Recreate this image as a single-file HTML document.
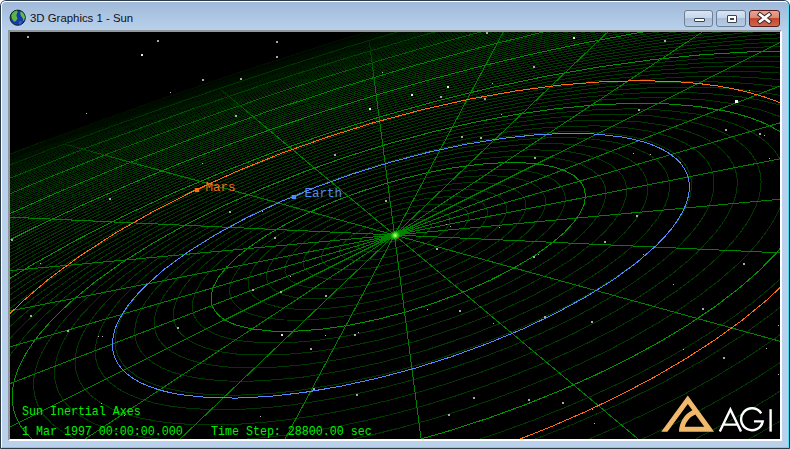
<!DOCTYPE html>
<html><head><meta charset="utf-8"><style>
html,body{margin:0;padding:0;background:#fff;width:790px;height:449px;overflow:hidden}
#win{position:absolute;left:0;top:0;width:790px;height:449px;box-sizing:border-box;
 border-radius:6px 6px 0 0;background:#b9d1ea;overflow:hidden}
#tb{position:absolute;left:0;top:0;width:790px;height:31px;background:linear-gradient(#9fb8d8,#a9c2e0 40%,#b9d1ea)}
#ob{position:absolute;left:0;top:0;width:790px;height:449px;box-sizing:border-box;border:1px solid #2c3a48;border-radius:6px 6px 0 0}
#ib{position:absolute;left:1px;top:1px;width:788px;height:447px;box-sizing:border-box;border:1px solid #fff;border-right-color:#52dcf6;border-bottom-color:#52dcf6;border-radius:5px 5px 0 0}
#title{position:absolute;left:30px;top:12px;font:11.4px "Liberation Sans",sans-serif;color:#101018;letter-spacing:0px}
.btn{position:absolute;top:10px;height:17px;box-sizing:border-box;border:1px solid #6d7f95;border-radius:3px;
 background:linear-gradient(#d9e4f1,#c6d6ea 45%,#a9bfd9 50%,#b8cde4)}
#bmin{left:684px;width:29px}
#bmax{left:716px;width:30px}
#bclose{left:749px;width:31px;border-color:#5a1e1e;background:linear-gradient(#e8a493,#d98a75 45%,#c2472c 50%,#d0674c)}
#vp{position:absolute;left:10px;top:32px;width:770px;height:407px;background:#000;overflow:hidden}
#sunk{position:absolute;left:8px;top:30px;width:774px;height:411px;box-sizing:border-box;border-style:solid;border-width:2px;border-color:#8f969e #fff #fff #8f969e}
svg{position:absolute;left:0;top:0}
.txt{position:absolute;font-family:"Liberation Mono",monospace;white-space:pre;color:#00f000;transform:scaleY(1.08);transform-origin:0 0}
</style></head><body>
<div id="win">
<div id="tb"></div>
<div id="ob"></div><div id="ib"></div>
<svg width="20" height="20" style="left:8px;top:8px" viewBox="0 0 20 20">
 <circle cx="9.7" cy="9.7" r="7.6" fill="#1838b0" stroke="#101828" stroke-width="1"/>
 <path d="M3.2 7.5 Q5 3.2 9 2.6 Q10.5 4.5 8.6 6.2 Q7.8 8.5 9.6 10.5 Q8.5 13.5 6 13.8 Q3.6 11.5 3.2 7.5Z" fill="#58b83c"/>
 <path d="M12.5 3.2 Q16.5 5 17 9.5 Q16.4 12.8 14.8 13.2 Q15.6 10 13.4 8.4 Q11.6 6.8 12.5 3.2Z" fill="#5cc040"/>
 <path d="M11.6 12.8 Q13.6 12.2 14.2 14.4 Q12.8 16.6 11 16.6 Q10.4 14.2 11.6 12.8Z" fill="#2a6a9a"/>
</svg>
<div id="title">3D Graphics 1 - Sun</div>
<div class="btn" id="bmin"><div style="position:absolute;left:9px;top:7px;width:9px;height:2px;border:1px solid #3a4450;background:#fff;border-radius:1px"></div></div>
<div class="btn" id="bmax"><div style="position:absolute;left:10px;top:4px;width:8px;height:6px;border:1px solid #3a4450;background:#fff;border-radius:1px"><div style="position:absolute;left:2px;top:2px;width:4px;height:2px;background:#3a4450"></div></div></div>
<div class="btn" id="bclose"><svg width="31" height="17" viewBox="0 0 31 17" style="left:-1px;top:-1px"><path d="M11 4.6 L20 11.4 M20 4.6 L11 11.4" stroke="#3a2a2a" stroke-width="4.6" stroke-linecap="square"/><path d="M11 4.6 L20 11.4 M20 4.6 L11 11.4" stroke="#fff" stroke-width="2.6" stroke-linecap="square"/></svg></div>
<div id="sunk"></div>
<div id="vp">
<svg width="770" height="407" viewBox="0 0 770 407">
<g fill="none" stroke-width="1" shape-rendering="crispEdges">
<path d="M421.9-16.8l-97 29.1l-96.5 31.1M428.7-19.6l-71.8 21.2l-72.3 22.5l-71.2 23.4l-71.1 24.4M426.2-19.8l-86.3 25.7l-85.5 27.1l-85.1 28.6l-86.3 30.5" stroke="#000600"/><path d="M403.2-5.7l-76.7 23.1l-76.4 24.5M449.4-20l-74.1 21.6l-73 22.4l-73 23.8l-74 25.3M445.8-19.9l-88.3 25.9l-87.1 27.3l-87.8 29.3l-87.4 31.1M442.2-19.9l-100.1 29.6l-98.9 31.6l-99.2 33.8l-99 36.1M438.5-19.7l-109.3 32.5l-108.5 35l-109.5 38l-109.8 40.9M436.1-20l-57.1 16.7l-57.7 17.6l-112.9 36.7l-113.3 39.7l-115.7 43.5M432.4-19.8l-10.5 3M228.4 43.4l-61.3 20.8l-62.5 22l-63 23.2l-62.7 23.9M142.3 71.9l-81.3 29.3l-81.1 30.6M83 92.1l-103.5 38.8" stroke="#000c00"/><path d="M380.5 7.1l-104.4 32.5M471.3-20l-76 21.7l-75.9 23l-74.5 24l-75.2 25.7M466.7-19.8l-91.1 26.3l-89.7 27.8l-88.6 29.5l-89.5 31.8M463.3-19.9l-102.7 29.8l-101.1 31.9l-100.9 34.4l-100.6 36.8M459.9-19.9l-55.7 15.9l-56.1 16.7l-55.8 17.5l-55.8 18.2l-55 18.7l-56 19.8l-56 20.6l-55.1 21M452.9-20l-49.7 14.3M250.1 41.9l-66.8 22.5l-68.2 24.1l-67.7 25.1l-67.8 26.1M155.3 73.1l-88 31.9l-88.4 33.8M95.2 93.7l-58.1 21.6l-57.5 22.1M45 111.2l-66 25.3M1.4 126.7l-21.5 8.3" stroke="#001300"/><path d="M491.1-19.7l-93.7 26.2l-92.8 28.4l-91.5 30.2l-92.2 32.8M486.8-19.7l-105 29.7l-103.9 32.3l-103.3 35l-104.2 38.3M483.6-20l-58.1 16.1l-57 16.8l-57.7 17.7l-56.4 18.3l-56.7 19.2l-56.3 19.9l-57.6 21.2l-56.8 21.9M479.2-19.9l-62 17.3l-62.1 18.4l-61.6 19.2l-61.6 20.3l-61 21l-61 22l-61.5 23.2l-62.4 24.5M474.6-19.8l-94.1 26.9M276.1 39.6l-74.4 24.8l-73.2 25.9l-74.2 27.7l-74.9 29.3M169.7 74.4l-95.1 34.7l-94.8 36.8M107.8 95.6l-63.9 23.9l-65.1 25.5M58 113l-78.8 30.5M14.4 128.5l-34.6 13.6" stroke="#001900"/><path d="M466.3-4.3l-67.2 18.8l-67.2 20.2l-66.9 21.5l-66.1 22.6M520.7-20l-98.3 26.6l-96.6 28.8l-95.9 31.3l-95.2 33.9M515.5-20l-55.2 14.7l-54 15.2l-54.4 16.2l-54.1 16.9l-54 17.7l-53.3 18.4l-52.8 19.1l-53.9 20.3M510.3-19.9l-60.2 16.2l-58.9 16.8l-58.1 17.5l-59 18.8l-58 19.5l-58.7 20.7l-58.7 21.8l-57.9 22.4M505-19.8l-64 17.4l-63.8 18.4l-63 19.3l-62.9 20.4l-62.2 21.3l-63.2 22.9l-62.4 23.6l-63.4 25.2M500.8-19.9l-66.7 18.2l-65.2 19l-65.7 20.3l-64.5 21.1l-65.1 22.6l-64 23.3l-64.6 24.8l-66 26.5M120.9 97.9l-71.4 27l-70.6 28.1M70.4 115.6l-91.5 36M27 131.1l-48 19.1M-14 146l-6.8 2.7" stroke="#001f00"/><path d="M455.9 6.7l-60.7 17.1l-61 18.3l-60.7 19.5l-59.7 20.4M522.7-12.1l-95.3 25.3l-93.6 27.7l-92.9 30.3l-92.8 33.2M541.5-19.7l-62 15.9l-61.6 16.9l-60.5 17.7l-61 19.1l-61 20.3l-60.5 21.3l-60.4 22.5l-59.7 23.4M536.7-20l-65.8 17.1l-66.3 18.5l-65.3 19.4l-64.8 20.7l-65 22.1l-64.8 23.3l-64 24.4l-64.9 26.1M530.7-19.8l-70.8 18.5l-70 19.8l-68.9 20.9l-68.7 22.4l-68 23.5l-68.1 25.1l-69 26.9l-68.1 28M525.7-19.9l-59.4 15.6M198.9 78.8l-54.2 19.5l-55.4 20.9l-54.5 21.5l-55.1 22.7M134.7 100.6l-77.9 29.9l-77.7 31.5M83.8 118.5l-51.7 20.3l-52.2 21.3M40.8 133.8l-61.3 24.9M0.1 148.7l-20.9 8.6" stroke="#002500"/><path d="M445.9 18.7l-54.4 15.2l-54.7 16.5l-54.5 17.5l-53.4 18.2M513.4-0.5l-89.2 23.5l-88.9 26.3l-87.1 28.5l-86.8 31.3M565-14.5l-58.1 14l-57.7 15.1l-56.5 15.9l-56.8 17l-56.5 18.2l-55.6 19l-56 20.3l-55.9 21.4M581.7-20l-65.9 15.7l-64.9 16.9l-64.5 18.2l-63.6 19.3l-63.4 20.7l-63.6 22.3l-63.5 23.7l-62.8 24.9M574.2-19.9l-69.6 16.9l-69.5 18.4l-68 19.6l-68.3 21.3l-67.2 22.5l-66.7 24l-67 25.7l-66.7 27.2M567.7-20l-73.3 18.1l-73.1 19.7l-71.6 21l-72 22.9l-71.1 24.4l-71.1 26.1l-70.7 27.8l-69.9 29.3M561.1-20l-53.3 13.1l-51.9 13.6M213.8 82l-59.3 21.5l-58.3 22.3l-58.7 23.7l-58.3 24.7M554.3-19.9l-31.6 7.8M148.1 104.4l-84.3 32.7l-84.6 35.2M54.8 137.4l-75.3 31.2M15.8 151.6l-35.9 15.1" stroke="#002c00"/><path d="M436.2 31.6l-48 13.5l-48.5 14.6l-48.2 15.5l-47.3 16.1M505.5 12l-83.7 21.7l-82.6 24.4l-81.9 26.8l-81.3 29.5M555.2-1.6l-54.5 12.9l-55.3 14.2l-54.2 15.2l-53.5 16.1l-53.3 17.1l-53.2 18.3l-52.6 19.3l-52.2 20.3M598.5-13l-66 14.8l-64.8 16.1l-65.3 17.8l-64.2 19.2l-63.8 20.6l-63.9 22.4l-62.5 23.5l-62.8 25.2M613.4-19.9l-77.7 17.4l-76.8 19.3l-75.7 21.2l-75.5 23.2l-75.3 25.4l-73.9 27.1l-73.5 29l-72.6 31M604.3-19.8l-79.1 18.1l-79.3 20.4M228.9 86.1l-63.3 23.1l-62.2 24.2l-62.9 26l-61.5 27.1M596.2-19.8l-82.8 19.3M161.4 109.1l-45.8 17.6l-45.5 18.4l-45.4 19.1l-45.5 20M589.1-19.9l-24.1 5.4M111.9 126.4l-66.1 26.9l-66.2 28.6M69.5 141.7l-45.3 18.8l-45.2 19.7M31.2 155.7l-51.5 22.1M-5.1 169.3l-15.5 6.7" stroke="#003200"/><path d="M398.2 203.6l4.2-3.9l0.5-1.7l-0.6-1.4l-1.6-1l-2.6-0.6l-7.5 0.3l-8.8 2.2l-8.3 3.5l-5.6 3.9l-1.4 1.9l-0.3 1.7l1.1 1.6l2.5 0.9l8.6-0.1l10.7-2.8l9.1-4.5M412.4 204.3l5-4l3.1-3.8l0.9-3.4l-1.3-2.8l-3.3-2l-5.3-1.1l-6.8-0.1l-8.1 0.8l-8.7 1.8l-9 2.6l-8.6 3.2l-7.8 3.7l-6.4 4l-4.8 4l-2.7 3.7l-0.7 3.3l0.7 1.7l1.5 1.5l5.2 1.9l7.7 0.6l9.7-0.9l10.7-2.3l10.8-3.4l9.9-4.2l8.3-4.8M427 205l7.3-6l4.4-5.7l1.1-2.6l0.2-2.4l-0.6-2.2l-1.4-1.9l-5.2-3l-7.9-1.6l-10.4-0.1l-12.1 1.3l-13.2 2.7l-13.3 3.8l-12.9 4.9l-11.6 5.6l-9.6 5.9l-7 5.9l-4.2 5.7l-0.8 2.6l-0.1 2.4l1.1 2.5l2.2 2.2l3.4 1.7l4.5 1.2l11.8 0.8l14.6-1.4l16.1-3.4l16.3-5.2l15-6.5l12.3-7.2M442 205.7l9.6-8l3.3-3.8l2.4-3.7l1.2-3.4l0.2-3.2l-0.9-2.9l-2-2.6l-3-2.1l-4-1.7l-10.7-2.1l-13.8-0.1l-16.2 1.7l-17.5 3.6l-17.8 5.2l-17.1 6.5l-15.5 7.5l-12.7 7.9l-9.3 7.9l-3.3 3.9l-2.2 3.6l-1.1 3.4l-0.1 3.2l1.4 3.5l3 2.9l4.6 2.3l6.1 1.6l7.3 0.8l8.4 0.2l19.8-1.9l21.7-4.7l21.8-7.1l20.1-8.7l16.3-9.7M457.5 206.4l11.7-9.9l4.1-4.8l2.7-4.5l1.5-4.4l0-3.9l-1.2-3.6l-2.6-3.1l-3.9-2.7l-5.1-2.1l-6.3-1.5l-7.3-0.9l-17.4-0.1l-20.2 2.2l-21.9 4.6l-22.2 6.5l-21.3 8.2l-19.1 9.3l-15.9 9.9l-11.6 9.9l-4.1 4.8l-2.7 4.5l-1.4 4.3l0 4l1.8 4.3l3.9 3.7l5.8 2.9l7.7 1.9l9.3 1.1l10.7 0.2l12-0.8l12.8-1.7l13.6-2.6l13.9-3.4l13.7-4.1l13.6-4.8l13-5.4l12-5.7l11-6.1l9.4-6.2M473.6 207.1l7.5-6l6.1-5.8l4.7-5.7l3.1-5.5l1.6-5.1l-0.1-4.7l-1.6-4.3l-3.3-3.7l-4.8-3.1l-6.2-2.5l-7.6-1.7l-8.9-1.1l-10.1-0.4l-10.9 0.3l-24.4 2.9l-26.3 5.5l-26.6 7.9l-25.5 9.8l-22.7 11.1l-19 11.9l-7.5 5.9l-6.3 6l-4.8 5.7l-3.3 5.5l-1.6 5.1l-0.1 4.8l2.2 5.3l4.7 4.4l7.1 3.4l9.3 2.4l11.2 1.3l13.1 0.2l14.5-1l15.7-2.1l16.3-3.2l16.8-4.2l16.8-5l16.5-5.9l15.5-6.5l14.7-7.1l13-7.3l11.2-7.5M490.1 207.9l8.5-7l7-6.8l5.3-6.7l3.5-6.3l1.6-6l-0.3-5.4l-2.2-4.9l-3.9-4.2l-5.7-3.6l-7.4-2.8l-9.1-2.1l-10.4-1.2l-11.7-0.4l-12.9 0.5l-14 1.3l-14.6 2.1l-30.7 6.5l-31 9.3l-29.7 11.5l-26.4 13l-11.6 6.8l-10.4 7l-8.7 6.9l-7.3 6.9l-5.5 6.7l-3.8 6.4l-1.9 5.9l-0.1 5.7l1 3.2l1.6 3l2.4 2.7l3.2 2.5l8.4 4.1l11 2.8l13.3 1.5l15.4 0.1l17.1-1.2l18.5-2.5l19.5-3.8l19.7-5l19.7-6.1l19.2-6.9l18.2-7.7l17-8.3l15.1-8.6l13.1-8.9M507.2 208.7l9.5-7.9l7.7-7.8l5.8-7.6l3.7-7.3l1.7-6.8l-0.6-6.1l-2.6-5.5l-4.7-4.8l-6.6-4l-8.7-3.2l-10.4-2.3l-12.2-1.3l-13.6-0.4l-14.7 0.6l-16 1.5l-16.7 2.5l-17.5 3.4l-17.7 4.2l-17.8 4.9l-17.5 5.7l-17.2 6.3l-16.7 6.9l-15.6 7.2l-14.6 7.7l-13.2 7.9l-11.7 7.9l-10 8l-8.3 7.9l-6.3 7.7l-4.2 7.3l-2.1 6.8l-0.1 6.3l1.2 3.8l1.9 3.4l2.8 3.2l3.6 2.8l9.7 4.6l12.9 3.3l15.6 1.7l17.8 0.1l19.9-1.5l21.4-3l22.5-4.5l22.7-5.8l22.6-7l22.1-8l20.7-8.9l19.4-9.6l17.4-10.2l14.7-10.1M524.8 209.5l10.6-9l8.4-8.8l6.1-8.4l3.9-8.1l1.6-7.5l-0.8-6.9l-3.2-6.1l-5.5-5.4l-7.8-4.5l-10-3.5l-11.9-2.4l-13.6-1.5l-15.3-0.3l-17 0.7l-17.9 1.8l-18.9 2.8l-19.6 3.8l-20 4.8l-19.9 5.6l-19.7 6.4l-19.4 7.1l-18.6 7.8l-17.6 8.2l-16.2 8.6l-14.9 8.9l-13.2 9l-11.3 9l-9.1 8.8l-7 8.6l-4.7 8.2l-2.4 7.8l-0 7.1l1.2 4.3l2.2 3.9l3.3 3.6l4.2 3.3l5.1 2.8l6.1 2.5l14.6 3.6l17.7 1.9l20.5 0.1l22.6-1.8l24.3-3.4l25.5-5.2l25.7-6.6l25.6-8.1l24.9-9.2l23.8-10.3l21.7-10.9l19.4-11.4l16.5-11.7M561.9 211.2l12.2-10.9l9.6-10.8l6.9-10.3l4.1-9.8l1.2-9.1l-0.4-4.2l-1.3-4.1l-1.9-3.9l-2.6-3.5l-7.3-6.4l-10.1-5.3l-12.6-4l-15-2.9l-17.2-1.6l-18.9-0.2l-20.8 1l-22.2 2.4l-23.3 3.6l-23.7 4.7l-24.4 5.9l-24.3 7l-24.4 8l-23.5 8.8l-22.7 9.6l-21.4 10.1l-19.8 10.6l-18 10.9l-16 11.1l-13.5 10.9l-11.1 10.9l-8.4 10.5l-5.7 10.1l-2.9 9.6l-0.3 4.5l0.3 4.3l1.7 5.3l2.9 5l4.1 4.6l5.3 4l6.5 3.5l7.5 3l8.8 2.6l9.6 1.9l22.4 2.3l25.4-0l28.2-2.2l30.7-4.5l31.7-6.6l32.5-8.6l31.7-10.1l31.1-11.8l29.1-12.9l26.8-13.9l23.6-14.5l19.8-14.6M581.5 212.1l13.1-12.1l10-11.7l7.1-11.1l4-10.7l0.9-5l0-5l-0.7-4.6l-1.5-4.3l-2.3-4.2l-3.1-3.8l-8.3-6.9l-11.3-5.6l-14-4.4l-16.6-3l-19-1.6l-21-0.2l-23 1.3l-24 2.6l-25.5 4l-26.4 5.4l-26.5 6.5l-26.5 7.7l-26.5 8.8l-25.6 9.7l-24.8 10.5l-23.3 11.1l-21.2 11.5l-19.7 12l-17.2 12l-14.8 12.1l-12 11.9l-9.1 11.5l-6.1 11.1l-3 10.3l-0.4 4.9l0.5 4.8l1.8 5.9l3.1 5.4l4.6 5l5.9 4.4l7.2 4l8.4 3.3l9.8 2.8l10.8 2.2l11.9 1.5l12.8 0.9l28.5 0l31.1-2.6l33.8-5l35-7.3l35.7-9.6l35.4-11.5l34-13.1l31.8-14.3l29-15.3l25.6-15.9l21.6-16.3M601.7 213.1l13.5-12.9l10.6-12.8l7.4-12.2l2.3-5.7l1.6-5.8l0.7-5.4l-0.1-5.2l-1-5l-1.8-4.7l-2.7-4.5l-3.5-4.2l-4.2-3.7l-5.2-3.6l-12.6-6l-15.6-4.7l-18.2-3.1l-20.7-1.7l-23.1-0.1l-24.8 1.5l-26.1 2.9l-27.7 4.4l-28.6 5.9l-28.8 7.1l-29 8.5l-28.3 9.4l-27.7 10.5l-26.8 11.5l-25.2 12.1l-23.1 12.5l-21.1 12.9l-18.7 13.2l-16 13.1l-12.9 12.9l-9.8 12.5l-6.7 12.1l-2.1 5.8l-1.2 5.5l-0.4 5.4l0.5 5.2l1.9 6.5l3.5 6l5.1 5.5l6.4 4.9l8.1 4.4l9.3 3.7l10.5 3l11.9 2.3l13.3 1.8l14.2 0.9l31.3-0.1l34.7-2.9l37-5.6l38.3-8.2l39-10.6l38.6-12.7l37-14.4l35-16l31.3-16.7l27.8-17.7l12.1-8.9l10.8-8.8M622.7 214l14.2-14l10.9-13.7l7.4-13l2.3-6.3l1.4-6l0.6-5.9l-0.4-5.5l-1.3-5.4l-2.2-5.1l-3-4.7l-4-4.4l-4.7-4.1l-5.8-3.8l-13.9-6.4l-17.1-4.9l-20.1-3.3l-22.4-1.7l-25.2 0l-27 1.7l-28.4 3.2l-29.9 4.9l-30.8 6.4l-31 7.8l-31.2 9.1l-30.8 10.4l-29.8 11.4l-28.8 12.4l-27.1 13.2l-24.9 13.5l-22.7 14.1l-20 14.2l-17 14.2l-13.8 13.9l-10.5 13.5l-4.1 6.7l-3 6.4l-2.3 6.3l-1.2 6l-0.4 5.9l0.6 5.5l2.2 7.1l3.8 6.5l5.6 6.1l7.2 5.3l8.6 4.7l10.3 4.1l11.6 3.2l13.2 2.6l14.3 1.8l15.7 1.1l16.5 0.3l17.6-0.5l37.8-3.2l40.3-6.3l42.4-9.1l42.4-11.6l41.8-14l40-15.8l37.7-17.4l34.2-18.7l15.5-9.6l14.1-9.6l13.1-9.8l11.5-9.7M644.4 215l14.7-15l11.1-14.5l4.2-7.1l3.3-7.1l2.3-6.7l1.2-6.5l0.3-6.3l-0.6-6l-1.6-5.5l-2.6-5.4l-3.6-5l-4.5-4.8l-5.4-4.3l-6.3-4l-7.2-3.5l-8.2-3.3l-18.6-5.1l-21.8-3.4l-24.5-1.7l-27 0.1l-29.2 1.9l-31.1 3.7l-32.2 5.3l-33.1 7l-33.6 8.6l-33.4 9.9l-32.9 11.2l-31.8 12.3l-30.8 13.4l-28.7 14l-26.7 14.7l-24 15l-21.5 15.4l-18.3 15.4l-14.7 15l-11.1 14.6l-4.1 7l-3.3 6.9l-2.3 6.6l-1.3 6.6l-0.4 6.3l0.6 6l2.5 7.8l4.4 7.3l6 6.4l7.9 5.9l9.5 5l11.4 4.5l12.9 3.5l14.1 2.8l15.8 1.9l16.8 1.1l18.2 0.3l19.5-0.6l20-1.4l21-2.3l43.8-6.9l45.9-10l45.8-12.8l45.1-15.2l43.8-17.6l40.4-19l18.8-10l17.6-10.2l16.7-10.6l15.1-10.5l13.5-10.5l12.2-10.6M667 216.1l15.1-16l6.1-7.8l5.3-7.9l4.2-7.7l3.1-7.3l2.1-7.2l1.1-7l-0-6.5l-0.9-6.4l-2-5.9l-3.1-5.8l-4.1-5.3l-5.1-5l-6-4.6l-7.1-4.2l-7.9-3.7l-8.9-3.4l-20.3-5.3l-23.4-3.5l-26.7-1.7l-29.3 0.3l-31.4 2.1l-32.9 4l-34.5 5.8l-35.3 7.6l-35.8 9.2l-35.6 10.6l-35.1 12l-33.8 13.2l-32.9 14.3l-30.6 15.1l-28.5 15.8l-25.8 16.2l-22.8 16.5l-19.4 16.5l-15.6 16l-11.8 15.7l-4.5 7.5l-3.5 7.5l-2.4 7.2l-1.4 7l-0.4 6.7l0.7 6.5l2.6 8.4l4.6 7.8l6.5 7l8.6 6.4l10.3 5.6l12 4.7l14.1 4l15.4 3l17.3 2.1l18.4 1.2l20 0.3l20.7-0.7l22-1.5l23.1-2.5l23.2-3.4l24-4.2l24.6-5l24.9-6l25.2-6.7l24.1-7.1l24.9-8.2l24.5-8.7l23.9-9.3l23-9.8l22.1-10.1l21-10.5l20.4-11l18.9-11.2l17.3-11.2l16.2-11.6l14.4-11.4l12.9-11.5M690.5 217.2l15.6-17.3l6.2-8.5l5.1-8.1l4-7.9l3.1-7.8l1.9-7.5l0.9-7.4l-0.3-7l-1.3-6.8l-2.5-6.4l-3.4-5.9l-4.6-5.6l-5.7-5.3l-6.7-4.8l-7.7-4.5l-8.7-3.9l-9.7-3.5l-21.9-5.6l-25.5-3.6l-28.5-1.7l-31.1 0.4l-33.7 2.4l-35.7 4.4l-36.8 6.3l-37.5 8.1l-38 9.8l-38.3 11.6l-37.2 12.8l-36.4 14.3l-34.3 15.1l-32.6 16.2l-30.4 17l-27.5 17.4l-24 17.5l-20.5 17.6l-16.5 17.2l-6.7 8.4l-5.9 8.4l-4.6 8.1l-3.7 8l-2.6 7.8l-1.4 7.6l-0.4 7.2l0.8 6.7l2.9 9.2l5 8.4l7.1 7.6l9.4 7l11.4 6.1l13.2 5.1l14.9 4.1l16.9 3.3l18.4 2.2l20.2 1.3l21.1 0.2l22.7-0.7l24.2-1.8l24.5-2.7l25.5-3.7l26.3-4.7l26.9-5.7l26.3-6.3l27.5-7.5l26.4-8l26.2-8.6l26.6-9.7l25-9.9l25-10.8l23.9-11.2l22.6-11.5l21.1-11.7l20.2-12.3l18.5-12.2l16.6-12.2l15.1-12.4l13.1-12.1M714.9 218.3l8.4-9.2l7.3-9l6.1-8.7l5.2-8.8l4-8.5l2.9-8.4l1.7-8l0.6-7.9l-0.6-7.4l-1.8-7l-2.9-6.7l-4.2-6.5l-5.2-5.9l-6.2-5.4l-7.4-5.1l-8.5-4.6l-9.4-4.1l-10.6-3.6l-11.6-3.2l-12.4-2.6l-27.4-3.7l-30.8-1.6l-33.4 0.6l-35.7 2.6l-38 4.9l-39 6.8l-40.3 8.8l-40.3 10.5l-40.4 12.4l-39.3 13.7l-38.4 15.2l-36.9 16.4l-34.5 17.3l-31.8 17.9l-28.8 18.5l-25.6 18.9l-21.5 18.7l-17.4 18.3l-7.1 9l-6.1 9l-4.9 8.7l-3.7 8.3l-2.7 8.3l-1.5 7.9l-0.3 7.8l0.8 7.3l3.2 9.9l5.5 9.1l7.7 8.3l9.9 7.4l12 6.4l14.4 5.6l16.2 4.5l18.5 3.6l20 2.4l21.3 1.3l23.2 0.3l24.9-0.9l25.4-1.9l26.8-3l27.9-4.1l27.7-5.1l28.4-6l28.7-7l28.9-7.9l28.8-8.8l28.4-9.6l27.9-10.3l27.1-10.9l27.1-11.8l24.8-11.9l24.4-12.6l22.7-12.8l20.9-12.9l19.7-13.4l17.6-13.2l15.9-13.5l13.7-13.1M740.3 219.5l8.3-9.5l7.4-9.7l6.2-9.3l5.2-9.5l3.8-9l2.7-9l1.4-8.5l0.2-8l-1.1-7.9l-2.3-7.4l-3.5-7.1l-4.6-6.6l-5.9-6.2l-6.9-5.7l-8.1-5.2l-9.4-4.9l-10.2-4.2l-11.4-3.8l-12.6-3.3l-13.3-2.7l-29.7-3.7l-32.7-1.5l-35.8 0.7l-38.6 3.1l-40.4 5.3l-41.3 7.3l-42.6 9.5l-43 11.4l-42.5 13.1l-41.9 14.8l-40.6 16.2l-38.8 17.5l-36.4 18.5l-33.2 19l-30.1 19.5l-26.8 20l-22.6 19.9l-9.6 9.7l-8.7 9.8l-7.4 9.6l-6.2 9.3l-5.2 9.3l-4 9l-2.7 8.9l-1.6 8.5l-0.3 8l0.9 7.9l3.5 10.7l6 9.9l8.5 9l10.8 7.9l13.1 7l15.7 6l17.8 4.9l19.6 3.7l21.2 2.5l23.3 1.5l25.3 0.2l26.3-1l27.8-2.2l28.2-3.2l29.3-4.4l30.2-5.6l30.9-6.6l31.3-7.8l31.5-8.8l30.1-9.3l29.7-10.2l30.2-11.3l29.3-12l28.1-12.5l26.8-13l25.1-13.3l24.3-14l22.3-14l20.1-14.1l18.6-14.3l16.8-14.6l14.2-14.2M789.9 94.1l-8.7-4.7l-9.7-4.4l-21.8-7.3l-24.8-5.7l-28.3-3.9l-30.3-2l-33.2-0.3l-35.2 1.6l-36.9 3.5l-38.6 5.2l-39.3 6.9l-40.5 8.6l-40.3 10.2l-40.6 11.7l-40.2 13l-39.7 14.5l-38.4 15.5l-37 16.6l-35 17.3l-32.7 17.9l-30.7 18.7l-27.6 18.8l-24.7 19l-21.6 19.1l-18.2 19l-14.7 18.7l-5.8 9.1l-4.9 8.8l-3.9 8.7l-3 8.4l-2.1 8.3l-1 8.3l-0.1 7.8l0.9 7.7l1.8 7.2l2.9 7.1l3.7 6.5l4.8 6.3l5.7 6l6.5 5.5M404.8 426.6l29.9-8.4l29.8-9.3l29.4-10l30.3-11.1l28.3-11.2l28.6-12.3l27.4-12.7l26.2-13.1l24.8-13.3l23.1-13.5l22.5-14.2l20.6-14.2l18.6-14l17.3-14.4l15.2-14.2l13.5-14.3M789.6 79.2l-17.6-5.8l-19.4-4.7l-21-3.7l-23-2.6l-24.4-1.6l-25.7-0.5l-26.7 0.6l-28.4 1.7l-29.2 2.7l-30 3.8l-30.7 4.8l-31.4 5.8l-31.9 6.9l-31.8 7.7l-31.6 8.5l-32 9.6l-31.8 10.3l-30.8 11l-30.5 11.7l-30.2 12.5l-29 13.1l-28 13.5l-26.8 14l-25.6 14.3l-24.2 14.8l-22.3 14.7l-20.7 15l-18.7 14.8l-17.3 15.3l-15.1 15l-13.1 14.9l-10.8 14.4M469.6 426.6l48.5-16.7l46.8-18.4l45.9-20.2l42.9-21.2l40.3-22.5l36-22.8l32.2-23.3l14.6-11.8l13.3-11.7M789.6 67.8l-19.1-4.4l-20.5-3.5l-21.9-2.6l-23.1-1.6l-24.3-0.7l-25.9 0.2l-26.3 1.2l-27.7 2.1l-28.5 3.1l-28.6 3.9l-29.9 4.8l-29.8 5.7l-30.4 6.6l-30.2 7.3l-30.8 8.2l-30.5 8.9l-30.3 9.6l-30.1 10.4l-29.8 11l-28.9 11.5l-27.9 12l-27.6 12.6l-26.5 13l-25.5 13.4l-24.3 13.7l-23.2 14l-21.8 14.2l-20.5 14.4l-19.1 14.6l-17.1 14.4l-15.9 14.7l-13.8 14.4M529 426.9l38.2-14.8l38.3-16.4l35.1-16.3l34.5-17.6l32.1-18l30.6-18.9l27.8-18.9l24.6-18.7M789.8 58.4l-19.9-3.4l-21.1-2.5l-22.3-1.8l-24-0.9l-24.4-0l-25.9 0.8l-26.8 1.6l-26.9 2.5l-27.6 3.3l-28.2 4l-28.9 4.9l-29.5 5.8l-59.1 13.6l-59.2 16.5l-58.4 19l-57.5 21.5l-27.7 11.5l-27.5 12.1l-26.4 12.5l-25.6 12.8l-24.4 13l-23.5 13.4l-22.8 14l-21.1 13.8l-19.9 13.9l-18.6 14.1l-17.2 14.2l-15.7 14.2M587.1 426.9l28.1-12l28.7-13.2l27.7-13.6l26.3-13.9l24.9-14l24.8-14.9l21.8-14.3l21.4-14.9M789.8 50.1l-21-2.5l-22-1.8l-23-1.1l-24.1-0.2l-24.9 0.5l-25.7 1.3l-53 4.8l-55.7 7.9l-56.6 10.6l-57.5 13.4l-58.1 16.1l-57.4 18.5l-56 20.6l-54.5 22.7l-51.6 24.3l-48.4 25.6l-23 13.3l-21.9 13.5l-20.2 13.3l-19.7 13.8l-18.4 14l-17.1 13.9M645.8 426.3l38.7-18.7l37.8-20l35.1-20.4l33.4-21.4M789.4 42.7l-21.6-1.8l-22.7-1.2l-23.6-0.4l-23.8 0.2l-50.6 2.7l-53.4 5.5l-54.6 8.2l-56.1 10.8l-57 13.5l-56.9 15.8l-56.2 18l-55.6 20.1l-53.5 21.9l-51.4 23.5l-48.5 24.8l-45.3 26l-41.3 26.6l-19.3 13.7l-18.1 13.7M702.8 426.4l45.7-24.5l41.8-25M789.4 36l-45.3-1.8l-48.1 0.7l-51 3.5l-53 6l-54.6 8.6l-55.5 11l-55.5 13.2l-56.2 15.7l-55.6 17.6l-55 19.8l-53 21.3l-51.1 22.8l-48.3 24l-46 25.5l-42.9 26.4l-38.8 26.8M760.9 426.3l29.4-17M789.3 29.9l-46-0.9l-49.2 1.7l-51.2 4.1l-52.3 6.4l-53.9 8.8l-54.7 11.1l-55.3 13.3l-55.4 15.4l-54.8 17.3l-54.3 19.2l-53 21l-51.2 22.5l-48.5 23.5l-46.5 25l-43.6 25.8l-39.7 26.3M789.4 24.2l-46.3 0l-49.4 2.3l-51.3 4.7l-52.2 6.8l-53.7 9l-54.4 11.3l-55.2 13.3l-54.5 15.2l-54.5 17.1l-53.4 18.8l-52.2 20.3l-51.2 22l-49.3 23.4l-46.7 24.4l-44.1 25.3l-41.1 26.1M789.7 13.9l-48.1 1.5l-50 3.6l-50.8 5.5l-52.4 7.5l-53.1 9.5l-53.7 11.4l-54.4 13.4l-53.7 15l-53.9 16.8l-52.7 18.3l-51.6 19.7l-50.8 21.2l-49 22.4l-47.5 23.7l-45 24.4l-43.1 25.6M789.3 9.2l-48.8 2.2l-49.6 4l-51.3 6l-52.7 7.9l-53.4 9.8l-53.2 11.5l-53.9 13.4l-53.1 14.9l-53.4 16.6l-52.2 18l-52 19.7l-50.3 20.8l-49.6 22.3l-47.2 23.1l-45.6 24.3l-43.2 24.9M789.9 4.8l-49.3 2.7l-50.1 4.5l-51.6 6.3l-52.2 8.2l-52.8 9.9l-53.4 11.7l-53.3 13.2l-53.4 15l-52.8 16.4l-52.4 18l-51.5 19.3l-50.6 20.6l-49.1 21.8l-47.6 22.9l-46.1 24l-43.8 24.7M789.8 0.5l-49.7 3.2l-50.4 5l-51 6.6l-52.4 8.5l-52.9 10.1l-52.8 11.7l-53.4 13.4l-52.7 14.7l-53 16.5l-51.8 17.6l-51.7 19.2l-50 20.2l-49.4 21.6l-47.9 22.7l-46.6 23.8l-44.3 24.4M789.9-3.5l-50 3.7l-50.6 5.3l-51.1 7l-52.5 8.7l-53.1 10.3l-52.8 11.8l-52.7 13.3l-52.8 14.9l-52.3 16.2l-51.9 17.6l-51.8 19.1l-50.2 20.1l-48.7 21.1l-48.2 22.5l-46.9 23.5l-44.6 24.1M789.4-7.4l-50.1 4.2l-50.8 5.7l-51.1 7.3l-52.7 8.9l-52.2 10.4l-52.8 11.9l-52.8 13.4l-52.8 14.9l-52.3 16.2l-51.9 17.5l-51.1 18.8l-50.3 19.9l-48.8 20.9l-48.4 22.3l-47.1 23.3l-45 23.9M789.4-11.1l-50.3 4.6l-51.7 6.1l-52.2 7.7l-51.6 9.1l-52.2 10.5l-52.8 12.1l-52.7 13.4l-52 14.7l-52.2 16.2l-51.2 17.2l-51 18.6l-50.3 19.8l-48.9 20.8l-48.5 22l-47.3 23l-45.2 23.6M789.9-14.7l-50.3 4.9l-51.8 6.5l-52.1 7.9l-51.6 9.2l-52.1 10.6l-51.9 12l-52.7 13.5l-51.9 14.6l-52.2 16.1l-51.1 17.1l-51 18.5l-50.3 19.6l-48.9 20.5l-48.5 21.7l-47.3 22.7l-46.2 23.7M789.9-18.1l-50.2 5.2l-51.7 6.7l-52.1 8.2l-52.4 9.5l-52 10.8l-52.7 12.2l-52.5 13.5l-51.8 14.7l-52.1 16.1l-51 17l-50 18.1l-50.3 19.4l-49.7 20.7l-48.5 21.5l-47.4 22.5l-46.2 23.3M748.6-19.9l-49.6 6.7l-49 7.7l-49.5 9l-49.2 10l-49.9 11.3l-48.9 12.1l-49 13.3l-49.3 14.5l-49 15.5l-47.9 16.3l-47.9 17.5l-47.4 18.3l-46.8 19.4l-46.5 20.4l-45.4 21.1l-44.2 21.8M726.8-19.9l-47.5 7.1l-48.1 8.2l-47.7 9.2l-48.5 10.3l-48.3 11.4l-47.4 12.1l-47.6 13.2l-48.1 14.4l-47.7 15.3l-46.7 16l-45.9 16.8l-46.2 18l-45.8 18.9l-44.4 19.4l-44.2 20.4l-43.1 20.9M708.7-19.9l-46.5 7.5l-47.2 8.6l-47 9.4l-46.7 10.4l-46.8 11.3l-46.8 12.3l-46.2 13l-45.8 13.9l-46.5 15.1l-45.5 15.7l-44.7 16.4l-45 17.4l-44.5 18.3l-44.2 19.2l-43 19.7l-42.9 20.6M692.4-19.8l-45.7 7.8l-46.3 8.8l-46.2 9.7l-45.1 10.3l-46.1 11.5l-45.3 12.1l-44.8 12.9l-45.4 13.9l-45.1 14.7l-44.2 15.4l-44.4 16.3l-43.8 17l-43.3 17.7l-42.9 18.5l-42.7 19.4l-41.5 19.7M678.8-19.9l-44.7 8l-45.6 9l-45.4 9.9l-44.4 10.4l-44.5 11.3l-44.8 12.2l-44.3 12.8l-44 13.7l-43.8 14.4l-43.8 15.2l-43.1 15.8l-43.3 16.9l-43 17.5l-41.6 17.8l-42.3 19.1l-41.1 19.4M665.9-20l-57.8 11l-57.9 12.4l-57.2 13.5l-56.8 14.7M244.2 91.3l-66.8 24.5l-66.8 26.6l-65.4 28l-65.3 30M653.8-19.9l-74.1 14.8l-74.2 17.1M176 114.4l-49.7 19.5l-49.4 20.4l-48.5 21.2l-48.5 22.4M642.4-19.9l-44.2 8.9l-43 9.4M126.4 131.8l-74 30.9l-73.4 33.1M631.9-19.8l-33.4 6.8M85.2 146.6l-52.6 22.6l-53.1 23.9M12.4 173.7l-33.4 15" stroke="#003800"/><path d="M423.7-20l-97 29.1l-97.7 31.4l-98.1 33.6l-98.2 35.6" stroke="#001100"/><path d="M32.7 109.7l-53.5 20.3" stroke="#002100"/><path d="M456.4-20l-59.6 17.1l-60.1 18.1l-59.7 18.9l-58.7 19.4l-59.4 20.5l-59.4 21.3l-59.8 22.3l-60.8 23.6" stroke="#003200"/><path d="M477-14.7l-73.7 20.7l-73.5 22.1l-73.1 23.4l-72.4 24.8" stroke="#004300"/><path d="M496.6-20l-19.6 5.3M184.3 76.3l-102.5 37.5l-102.9 40.7" stroke="#005300"/><path d="M548.6-20l-58.4 14.7l-56.8 15.4l-56.9 16.4l-56.3 17.2l-56.1 18.2l-55.3 19l-55.9 20.1l-55.8 21.2" stroke="#006400"/><path d="M97.1 122.2l-58.5 23.4l-59.3 24.9" stroke="#007500"/><path d="M622.2-19.8l-74.1 16.2l-73.3 17.9l-73.2 20l-72 21.6l-71.4 23.4l-70.8 25.3l-70.9 27.3l-69.7 28.9" stroke="#008500"/><path d="M543 210.3l11.5-10l9.1-9.8l6.5-9.3l4-9l1.4-8.3l-1.2-7.7l-3.9-6.7l-6.4-5.8l-8.9-4.9l-11.3-3.8l-13.3-2.6l-15.5-1.5l-17.3-0.3l-18.7 0.8l-20.1 2.1l-21.1 3.2l-21.9 4.4l-22.1 5.3l-22.1 6.3l-21.9 7.2l-21.4 7.9l-20.7 8.7l-19.4 9.2l-18 9.5l-16.4 9.8l-14.4 10l-12.5 10l-10.2 9.9l-7.8 9.7l-5.2 9.2l-2.6 8.6l0.1 7.9l1.4 4.8l2.7 4.5l3.7 4l4.7 3.6l5.8 3.2l6.7 2.7l16.5 4l20.3 2.1l23 0l25.4-2l27.2-3.9l28.6-5.9l28.8-7.5l28.6-9.1l28.2-10.5l26.4-11.6l24-12.3l21.4-12.8l18.3-13.3M789.9 117.7l-5.5-6.4l-6.8-6.1l-7.6-5.5l-8.9-5.1l-9.7-4.6l-10.8-4.1l-12-3.7l-12.7-3.1l-28-4.7l-31.5-2.6l-34.2-0.5l-36.9 1.6l-38.9 3.8l-41.2 5.9l-41.9 7.9l-42.5 9.8l-42.8 11.6l-43 13.4l-41.8 14.8l-40.4 16.2l-39 17.4l-36.6 18.2l-34.1 19.1l-31.2 19.6l-27.7 19.9l-24.3 20l-20.1 19.8l-8.6 9.8l-7.6 9.9l-6.4 9.5l-5.2 9.3l-4.3 9.2l-3 8.9l-1.9 8.8l-0.7 8.4l0.5 7.9l1.5 7.7l2.7 7.2l3.8 7l5.1 6.7l6 6.2l7.3 5.8l8 5.2l9.3 4.9l10.5 4.4M327.8 426.9l37.4-8.1l38-9.6l38.1-11l37.7-12.3l36.9-13.4l35.7-14.4l34.1-15.2l33.3-16.3l30.8-16.8l28.2-17l26.2-17.6l23.6-17.9l20.8-18.1l17.2-17.5l13.8-17.2l10.5-16.7M789.2 18.9l-47.3 0.8l-49.3 3l-51.2 5.1l-52.7 7.2l-53.5 9.4l-54.1 11.3l-54.8 13.4l-54.1 15.1l-54.3 17.1l-53.1 18.5l-51.9 20.1l-51 21.6l-49.3 23l-46.8 23.9l-44.2 24.7l-42.2 25.8M775.2-20l-50.7 6l-50.1 7.1l-51.4 8.6l-51 9.7l-50.6 10.9l-51.4 12.2l-51.3 13.5l-50.6 14.5l-51.1 15.9l-49.9 16.8l-49 17.7l-49.3 19l-48.7 20.2l-47.6 20.9l-46.3 21.7l-46.3 23M46.8 160.8l-67.7 30.1" stroke="#009600"/><path d="M359.8 13.4l-0.6-5M213.4 59.8l-3.9-3.3M57.7 112.9l-3.2-0.9" stroke="#002b00"/><path d="M360.6 19.6l-0.8-6.2M219.1 64.5l-5.7-4.7M68.9 116l-11.2-3.1" stroke="#003a00"/><path d="M501-14.2l3.2-6M361.5 26.6l-0.9-7M225.6 69.9l-6.5-5.4M81.1 119.4l-12.2-3.4" stroke="#004800"/><path d="M495.9-4.8l5.1-9.4M362.6 34.5l-1.1-7.9M232.5 75.7l-6.9-5.8M94.6 123.1l-13.5-3.7" stroke="#005700"/><path d="M490.1 6l5.8-10.8M363.7 43.1l-1.1-8.6M240.3 82.2l-7.8-6.5M109.5 127.2l-14.9-4.1" stroke="#006500"/><path d="M616.5-17.8l2.4-2.3M483.8 17.8l6.3-11.8M364.9 52.8l-1.2-9.7M248.9 89.5l-8.6-7.3M126.1 131.8l-16.6-4.6M-16.3 184.4l-4-0.1" stroke="#007400"/><path d="M384.5 203l408.8 18.9M384.5 203l408.4-37.9M384.5 203l406.1-80.3M384.5 203l406.6-118.3M384.5 203l407.4-157.5M384.5 203l405.8-202.7M384.5 203l338.6-223.3M384.5 203l232-220.8M384.5 203l99.3-185.2M384.5 203l-19.6-150.2M384.5 203l-135.6-113.5M384.5 203l-258.4-71.2M384.5 203l-400.8-18.6M384.5 203l-405.6 37.6M384.5 203l-404.8 80M384.5 203l-406.5 118.3M384.5 203l-406.3 157M384.5 203l-407.4 203.6M384.5 203l-342 225.5M384.5 203l-237.5 226M384.5 203l-121.1 225.8M384.5 203l29.4 225.5M384.5 203l269.7 225.8M384.5 203l408.5 112.6" stroke="#008200"/>
</g>
<g shape-rendering="crispEdges"><rect x="17" y="4" width="2" height="2" fill="#a8a8a8"/><rect x="147" y="8" width="2" height="2" fill="#a8a8a8"/><rect x="131" y="22" width="2" height="2" fill="#e8e8e8"/><rect x="192" y="47" width="2" height="2" fill="#a8a8a8"/><rect x="160" y="60" width="1" height="1" fill="#b8b8b8"/><rect x="76" y="81" width="1" height="1" fill="#b8b8b8"/><rect x="266" y="9" width="2" height="2" fill="#a8a8a8"/><rect x="266" y="24" width="2" height="2" fill="#a8a8a8"/><rect x="230" y="46" width="2" height="2" fill="#a8a8a8"/><rect x="372" y="40" width="1" height="1" fill="#b8b8b8"/><rect x="225" y="83" width="2" height="2" fill="#a8a8a8"/><rect x="359" y="76" width="2" height="2" fill="#e8e8e8"/><rect x="476" y="0" width="2" height="2" fill="#a8a8a8"/><rect x="563" y="5" width="2" height="2" fill="#e8e8e8"/><rect x="523" y="34" width="2" height="2" fill="#a8a8a8"/><rect x="437" y="54" width="2" height="2" fill="#e8e8e8"/><rect x="482" y="51" width="1" height="1" fill="#b8b8b8"/><rect x="401" y="62" width="2" height="2" fill="#e8e8e8"/><rect x="430" y="64" width="2" height="2" fill="#a8a8a8"/><rect x="474" y="66" width="2" height="2" fill="#a8a8a8"/><rect x="491" y="82" width="1" height="1" fill="#b8b8b8"/><rect x="654" y="8" width="2" height="2" fill="#a8a8a8"/><rect x="739" y="58" width="1" height="1" fill="#b8b8b8"/><rect x="725" y="68" width="3" height="3" fill="#ffffff"/><rect x="628" y="77" width="2" height="2" fill="#a8a8a8"/><rect x="715" y="97" width="2" height="2" fill="#a8a8a8"/><rect x="749" y="101" width="2" height="2" fill="#a8a8a8"/><rect x="192" y="131" width="1" height="1" fill="#b8b8b8"/><rect x="99" y="166" width="2" height="2" fill="#a8a8a8"/><rect x="324" y="122" width="2" height="2" fill="#a8a8a8"/><rect x="219" y="179" width="2" height="2" fill="#a8a8a8"/><rect x="252" y="179" width="1" height="1" fill="#b8b8b8"/><rect x="375" y="168" width="2" height="2" fill="#a8a8a8"/><rect x="451" y="104" width="2" height="2" fill="#a8a8a8"/><rect x="470" y="105" width="2" height="2" fill="#a8a8a8"/><rect x="524" y="125" width="2" height="2" fill="#a8a8a8"/><rect x="436" y="192" width="1" height="1" fill="#b8b8b8"/><rect x="440" y="194" width="1" height="1" fill="#b8b8b8"/><rect x="489" y="195" width="1" height="1" fill="#b8b8b8"/><rect x="623" y="121" width="1" height="1" fill="#b8b8b8"/><rect x="640" y="122" width="1" height="1" fill="#b8b8b8"/><rect x="670" y="130" width="1" height="1" fill="#b8b8b8"/><rect x="759" y="126" width="1" height="1" fill="#b8b8b8"/><rect x="626" y="183" width="2" height="2" fill="#a8a8a8"/><rect x="754" y="103" width="1" height="1" fill="#b8b8b8"/><rect x="1" y="207" width="2" height="2" fill="#a8a8a8"/><rect x="30" y="231" width="1" height="1" fill="#b8b8b8"/><rect x="20" y="283" width="2" height="2" fill="#a8a8a8"/><rect x="57" y="298" width="2" height="2" fill="#a8a8a8"/><rect x="88" y="304" width="1" height="1" fill="#b8b8b8"/><rect x="92" y="304" width="1" height="1" fill="#b8b8b8"/><rect x="167" y="295" width="2" height="2" fill="#a8a8a8"/><rect x="264" y="205" width="2" height="2" fill="#a8a8a8"/><rect x="280" y="244" width="1" height="1" fill="#b8b8b8"/><rect x="242" y="257" width="2" height="2" fill="#a8a8a8"/><rect x="270" y="259" width="2" height="2" fill="#a8a8a8"/><rect x="315" y="263" width="2" height="2" fill="#a8a8a8"/><rect x="271" y="302" width="2" height="2" fill="#e8e8e8"/><rect x="315" y="303" width="1" height="1" fill="#b8b8b8"/><rect x="344" y="302" width="2" height="2" fill="#a8a8a8"/><rect x="348" y="300" width="1" height="1" fill="#b8b8b8"/><rect x="426" y="216" width="2" height="2" fill="#a8a8a8"/><rect x="523" y="224" width="2" height="2" fill="#a8a8a8"/><rect x="528" y="222" width="1" height="1" fill="#b8b8b8"/><rect x="417" y="277" width="1" height="1" fill="#b8b8b8"/><rect x="449" y="278" width="2" height="2" fill="#a8a8a8"/><rect x="483" y="291" width="1" height="1" fill="#b8b8b8"/><rect x="534" y="284" width="2" height="2" fill="#a8a8a8"/><rect x="594" y="209" width="2" height="2" fill="#a8a8a8"/><rect x="633" y="222" width="1" height="1" fill="#b8b8b8"/><rect x="733" y="231" width="2" height="2" fill="#a8a8a8"/><rect x="663" y="252" width="1" height="1" fill="#b8b8b8"/><rect x="692" y="276" width="2" height="2" fill="#a8a8a8"/><rect x="581" y="289" width="2" height="2" fill="#a8a8a8"/><rect x="768" y="293" width="1" height="1" fill="#b8b8b8"/><rect x="91" y="371" width="1" height="1" fill="#b8b8b8"/><rect x="114" y="383" width="1" height="1" fill="#b8b8b8"/><rect x="300" y="316" width="2" height="2" fill="#a8a8a8"/><rect x="303" y="356" width="2" height="2" fill="#a8a8a8"/><rect x="346" y="362" width="2" height="2" fill="#a8a8a8"/><rect x="250" y="384" width="1" height="1" fill="#b8b8b8"/><rect x="463" y="365" width="2" height="2" fill="#a8a8a8"/><rect x="518" y="367" width="2" height="2" fill="#a8a8a8"/><rect x="552" y="370" width="2" height="2" fill="#a8a8a8"/><rect x="438" y="382" width="2" height="2" fill="#a8a8a8"/><rect x="673" y="317" width="1" height="1" fill="#b8b8b8"/><rect x="713" y="325" width="2" height="2" fill="#a8a8a8"/><rect x="756" y="316" width="1" height="1" fill="#b8b8b8"/><rect x="768" y="342" width="1" height="1" fill="#b8b8b8"/><rect x="584" y="391" width="1" height="1" fill="#b8b8b8"/><rect x="582" y="377" width="1" height="1" fill="#b8b8b8"/></g>
<g fill="none" stroke-width="1" shape-rendering="crispEdges">
<path d="M345.4 456.9l40.3-9.8l38.9-10.9l38.5-12.3l39.2-13.9l38.1-15l36.6-16l34.8-16.7l33.8-17.9l31.2-18.3l29.4-19.1l26.4-19.1l23.9-19.6l20.4-19.1l17.6-19.2l14.4-19l11-18.6M820.1 108l-6.1-7.7l-7.2-7.2l-8.5-6.7l-9.9-6.4l-10.8-5.8l-11.7-5.1l-12.9-4.6l-14.2-4.1l-15-3.5l-16.1-2.9l-16.8-2.2l-17.8-1.7l-38.5-1.5l-40.7 1l-43.2 3.4l-44.8 5.9l-46.7 8.3l-47 10.5l-47.7 12.7l-46.9 14.6l-45.7 16.2l-45 18.1l-43.4 19.7l-40.7 20.7l-37.8 21.6l-34.6 22.4l-31 22.8l-27.1 23.2l-11.9 11.5l-10.9 11.6l-9.7 11.4l-8.7 11.5l-7.3 11.2l-5.9 10.8l-4.9 10.7l-3.7 10.8l-2.4 10.2l-1.1 10.2l0.2 9.6l1.5 9.4l2.7 8.8l4 8.5l5.3 8.2l6.4 7.6l7.7 7.2l8.7 6.4l9.9 6.1l11.1 5.6" stroke="#ff6c14"/>
<path d="M492.4 106.4l-36.2 5.8l-37.6 8l-38.1 10l-37.9 11.7l-37.3 13.5l-35.3 14.6l-33.5 15.9l-30.9 16.8l-27.7 17.3l-23.9 17.5l-19.6 17.5l-8.2 8.6l-7 8.3l-5.7 8.2l-4.7 8.1l-3.4 7.8l-2.1 7.7l-0.9 7.3l0.3 6.8l1.6 6.7l2.9 6.1l4 5.6l5.2 5.3l6.4 4.8l7.5 4.3l8.5 3.7l9.7 3.4l10.9 2.8l11.6 2.2l26.4 2.8l29.1 0.6l31.9-1.6l34.6-3.9l35.9-6l37.3-8.1l37.9-10l36.9-11.6l36.7-13.4l35-14.5l33.3-15.9l30.2-16.4l27.2-17l23.5-17.2l19.4-17l8.3-8.6l7.1-8.4l5.8-8l4.8-8l3.5-7.7l2.3-7.6l1.2-7.2l-0.1-6.9l-1.3-6.7l-2.6-6.2l-3.8-5.8l-4.9-5.3l-6.2-4.9l-7.1-4.4l-8.3-3.9l-9.5-3.4l-10.7-2.9l-11.4-2.4l-25.9-3.1l-29.1-0.8l-31.7 1.4l-34.3 3.7" stroke="#5289ff"/>
</g>
<radialGradient id="sg"><stop offset="0" stop-color="#e8ffb0"/><stop offset=".3" stop-color="#60f030"/><stop offset=".7" stop-color="#20c010" stop-opacity=".6"/><stop offset="1" stop-color="#00a000" stop-opacity="0"/></radialGradient>
<circle cx="385.2" cy="203.4" r="5.5" fill="url(#sg)"/>
<g fill="#c83018" opacity=".8"><rect x="381" y="200" width="1" height="1"/><rect x="389" y="201" width="1" height="1"/><rect x="382" y="207" width="1" height="1"/><rect x="388" y="206" width="1" height="1"/><rect x="385" y="208" width="1" height="1"/></g>
<rect x="184.7" y="156" width="4.5" height="4" fill="#ff6c14"/>
<path d="M188 157.5 L195 154.5" stroke="#ff6c14" stroke-width="1"/>
<rect x="281.6" y="163" width="4.5" height="4" fill="#5289ff"/>
<path d="M285 164.5 L293 161" stroke="#5289ff" stroke-width="1"/>
<text x="195.5" y="159" font-family="Liberation Mono" font-size="12.5" fill="#ff6c14">Mars</text>
<text x="294.5" y="164.8" font-family="Liberation Mono" font-size="12.5" fill="#5289ff">Earth</text>
<g transform="translate(-10,-32)">
<path d="M687.77 395.56L714.16 431.78L661.28 431.78ZM687.77 403.98L692.36 410.29A24 24 0 0 0 679.00 431.78L667.44 431.78ZM695.36 414.40A19 19 0 0 0 684.72 426.63L704.27 426.63Z" fill="#f0b96c" fill-rule="evenodd"/>
<g fill="none" stroke="#fff" stroke-width="2.4">
<path d="M719.8 431.6L730.4 409.6L741 431.6M722.8 424.6H738"/>
<path d="M761.2 413.3A10.9 11 0 1 0 762.7 421.4H754"/>
<path d="M770.6 409.2V431.6"/>
</g></g>
</svg>
<div class="txt" style="left:12px;top:371.5px;font-size:11.65px">Sun Inertial Axes</div>
<div class="txt" style="left:12px;top:391.5px;font-size:11.65px">1 Mar 1997 00:00:00.000</div><div class="txt" style="left:201px;top:391.5px;font-size:11.65px">Time Step: 28800.00 sec</div>
</div>
</div>
</body></html>
